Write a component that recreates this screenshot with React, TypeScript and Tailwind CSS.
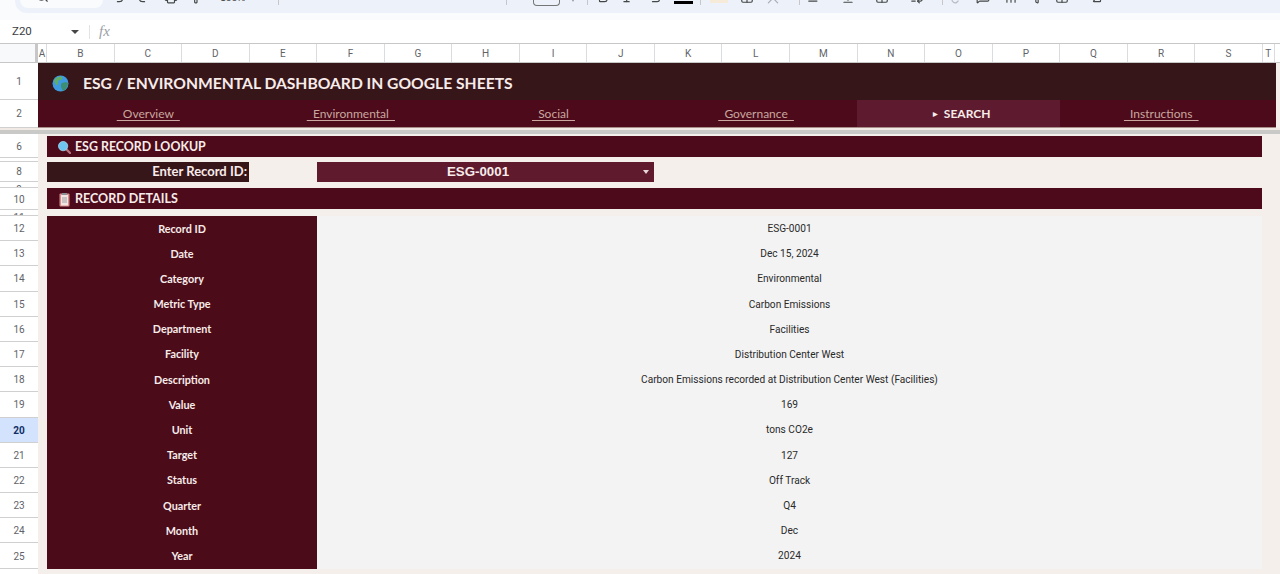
import React from "react";
import { Undo2, Redo2, Printer, PaintRoller, ArrowLeft, ArrowRight, Bold, Italic, Strikethrough, Grid2x2, Merge, AlignLeft, ArrowDownToLine, Columns2, WrapText, Link, MessageSquare, BarChart2, Filter, Table, Sigma, Plus, Search } from "lucide-react";

const columns = ["A","B","C","D","E","F","G","H","I","J","K","L","M","N","O","P","Q","R","S","T"];
const nav = ["Overview","Environmental","Social","Governance","SEARCH","Instructions"];
const records: [number,string,string][] = [
  [12,"Record ID","ESG-0001"],[13,"Date","Dec 15, 2024"],[14,"Category","Environmental"],[15,"Metric Type","Carbon Emissions"],
  [16,"Department","Facilities"],[17,"Facility","Distribution Center West"],[18,"Description","Carbon Emissions recorded at Distribution Center West (Facilities)"],
  [19,"Value","169"],[20,"Unit","tons CO2e"],[21,"Target","127"],[22,"Status","Off Track"],[23,"Quarter","Q4"],[24,"Month","Dec"],[25,"Year","2024"],
];

function RowNo({ n, className = "", active = false }: { n: number | string; className?: string; active?: boolean }) {
  const tone = active ? "bg-[#d3e3fd] text-[#0f2f66] font-bold" : "bg-white text-[#5f6368]";
  return <div className={"w-[38px] shrink-0 flex items-center justify-center border-b border-[#d0d0d0] text-[10px] overflow-hidden font-['Roboto',sans-serif] " + tone + " " + className}>{n}</div>;
}
const Ico = ({ children, className = "" }: { children: React.ReactNode; className?: string }) => (
  <span className={"shrink-0 w-[14px] flex justify-center text-[#444746] -mt-[10px] " + className}>{children}</span>
);
const Sep = ({ className = "" }: { className?: string }) => <span className={"shrink-0 w-px h-[5px] bg-[#c7c7c7] " + className} />;

function Globe() {
  return (
    <svg width="17" height="17" viewBox="0 0 17 17" className="shrink-0">
      <circle cx="8.5" cy="8.5" r="8" fill="#3f9be0" />
      <path d="M3 4c2-2 5-3 7-2 1 1 0 3-2 3S6 7 6 9s-2 1-3-1-1-3 0-4z" fill="#5fae6a" />
      <path d="M10 8c2-1 5-1 6 0 0 3-2 7-5 8-1-2-2-3-2-5s0-2 1-3z" fill="#3c8f72" />
    </svg>
  );
}
function Lens() {
  return (
    <svg width="13" height="13" viewBox="0 0 14 14" className="shrink-0">
      <path d="M8.5 8.5 13 13" stroke="#b8747f" strokeWidth="2.4" strokeLinecap="round" />
      <circle cx="5.5" cy="5.5" r="5" fill="#6ec6f0" stroke="#a9dcf2" strokeWidth="0.8" />
    </svg>
  );
}
function Clip() {
  return (
    <svg width="11" height="14" viewBox="0 0 11 14" className="shrink-0">
      <rect x="0.5" y="0.5" width="10" height="13" rx="1" fill="#d98e8e" />
      <rect x="2" y="2" width="7" height="10.5" fill="#f2e4e0" />
      <rect x="3" y="0" width="5" height="2" fill="#8a8f98" />
      <path d="M3 5h5M3 7h5M3 9h5" stroke="#8a8f98" strokeWidth="0.8" />
    </svg>
  );
}

export default function App() {
  return (
    <div className="w-[1280px] h-[574px] overflow-hidden bg-[#f4efeb] flex flex-col font-['Lato','Liberation_Sans',sans-serif]">
      {/* clipped toolbar */}
      <div className="bg-[#f9fbfd] h-[20px] shrink-0 pl-[15px]">
        <div className="h-[13px] bg-[#edf2fa] rounded-bl-[12px] overflow-hidden flex items-start">
          <span className="shrink-0 ml-[5px] w-[83px] h-[8px] bg-[#f9fbfd] rounded-b-[10px] flex justify-start pl-[15px] overflow-hidden">
            <Search size={14} className="shrink-0 -mt-[11px] text-[#444746]" />
          </span>
          <Ico className="ml-[8px]"><Undo2 size={14} /></Ico>
          <Ico className="ml-[12px]"><Redo2 size={14} /></Ico>
          <Ico className="ml-[13px]"><Printer size={14} /></Ico>
          <Ico className="ml-[12px]"><PaintRoller size={14} /></Ico>
          <span className="shrink-0 ml-[16px] w-[30px] -mt-[8px] text-[10px] leading-[10px] text-[#444746]">100%</span>
          <Sep className="ml-[28px]" />
          <Ico className="ml-[64px]"><ArrowLeft size={12} /></Ico>
          <Ico className="ml-[14px]"><ArrowRight size={12} /></Ico>
          <Sep className="ml-[121px]" />
          <span className="shrink-0 ml-[26px] w-[27px] h-[6px] rounded-b-[4px] border border-t-0 border-[#747775]" />
          <span className="shrink-0 w-[10px] ml-[8px] -mt-[7px] flex justify-center text-[#444746]"><Plus size={10} /></span>
          <Sep className="ml-[9px]" />
          <Ico className="ml-[8px]"><Bold size={14} /></Ico>
          <Ico className="ml-[11px]"><Italic size={14} /></Ico>
          <Ico className="ml-[14px]"><Strikethrough size={14} /></Ico>
          <span className="shrink-0 ml-[11px] mt-[1px] w-[19px] h-[3px] bg-black" />
          <Sep className="ml-[7px]" />
          <span className="shrink-0 ml-[9px] w-[18px] h-[3px] bg-[#f6ead9]" />
          <Ico className="ml-[12px]"><Grid2x2 size={14} /></Ico>
          <Ico className="ml-[12px] opacity-40"><Merge size={14} /></Ico>
          <Sep className="ml-[19px]" />
          <Ico className="ml-[7px]"><AlignLeft size={14} /></Ico>
          <Ico className="ml-[20px]"><ArrowDownToLine size={14} /></Ico>
          <Ico className="ml-[20px]"><Columns2 size={14} /></Ico>
          <Ico className="ml-[21px]"><WrapText size={14} /></Ico>
          <Sep className="ml-[18px]" />
          <Ico className="ml-[8px] opacity-30"><Link size={14} /></Ico>
          <Ico className="ml-[11px]"><MessageSquare size={14} /></Ico>
          <Ico className="ml-[14px]"><BarChart2 size={14} /></Ico>
          <Ico className="ml-[12px]"><Filter size={14} /></Ico>
          <Ico className="ml-[11px]"><Table size={14} /></Ico>
          <Ico className="ml-[21px]"><Sigma size={14} /></Ico>
        </div>
      </div>

      {/* formula bar */}
      <div className="h-[23px] shrink-0 bg-white flex items-center text-[#444746]">
        <span className="w-[68px] pl-[12px] text-[11.5px] font-['Roboto',sans-serif] text-[#3c4043]">Z20</span>
        <svg width="8" height="4" viewBox="0 0 8 4" className="ml-[3px]"><path d="M0 0h8L4 4z" fill="#444746" /></svg>
        <span className="ml-[10px] w-px h-[14px] bg-[#e3e3e3]" />
        <span className="ml-[9px] text-[15px] italic font-['Liberation_Serif',serif] text-[#9aa0a6]">fx</span>
      </div>

      {/* column headers */}
      <div className="h-[20px] shrink-0 flex bg-white border-y border-[#c7c7c7] text-[10px] text-[#5f6368] font-['Roboto',sans-serif]">
        <div className="w-[38px] shrink-0 bg-[#f8f9fa] border-r-[3px] border-[#c7c7c7]" />
        <div className="flex-1 grid grid-cols-[9px_repeat(18,67.55px)_12px_1fr]">
          {columns.map((c) => (
            <div key={c} className="flex items-center justify-center border-r border-[#dadce0]">{c}</div>
          ))}
          <div />
        </div>
      </div>

      {/* frozen banner */}
      <div className="flex h-[37px] shrink-0">
        <RowNo n={1} />
        <div className="w-[1238px] bg-[#37161a] flex items-center pl-[14px] pt-[4px] gap-[14px]">
          <Globe />
          <span className="text-[15.65px] font-bold text-[#f7ecea]">ESG / ENVIRONMENTAL DASHBOARD IN GOOGLE SHEETS</span>
        </div>
      </div>
      <div className="flex h-[28px] shrink-0">
        <RowNo n={2} />
        <div className="w-[1238px] bg-[#4d0a1a] border-b border-[#a98f8a] flex pl-[9px]">
          {nav.map((t) =>
            t === "SEARCH" ? (
              <div key={t} className="w-[202.6px] bg-[#5e1a2e] flex items-center justify-center pl-[6px] gap-[6px] text-[12px] font-bold text-[#f7ecea]">
                <span className="text-[6px]">▶</span>SEARCH
              </div>
            ) : (
              <div key={t} className="w-[202.6px] flex items-center justify-center text-[12px] text-[#c9a79f] underline underline-offset-2 whitespace-pre">{"  " + t + "  "}</div>
            )
          )}
        </div>
      </div>

      {/* freeze divider */}
      <div className="h-[6px] shrink-0 flex flex-col">
        <div className="h-[2px] bg-[#f0e9e4]" />
        <div className="h-[4px] bg-[#c9c9c7]" />
      </div>

      {/* row 6 */}
      <div className="flex h-[24px] shrink-0">
        <RowNo n={6} className="pt-[2px]" />
        <div className="ml-[9px] w-[1215px] mt-[2px] h-[21px] bg-[#4d0a1a] flex items-center pl-[11px] pt-[1px] gap-[4px] text-[12.4px] font-bold text-[#f7ecea]">
          <Lens />ESG RECORD LOOKUP
        </div>
      </div>
      <div className="flex h-[4px] shrink-0"><RowNo n="" /></div>

      {/* row 8 */}
      <div className="flex h-[20px] shrink-0">
        <RowNo n={8} />
        <div className="ml-[9px] w-[202px] bg-[#37161a] flex items-center justify-end pr-[2px] text-[13px] font-bold text-[#f7ecea]">Enter Record ID:</div>
        <div className="ml-[68px] w-[337px] bg-[#5f1a2e] flex items-center pr-[5px]">
          <span className="flex-1 text-center pr-[4px] text-[13.3px] font-bold text-[#f7ecea] font-['Liberation_Sans',sans-serif]">ESG-0001</span>
          <svg width="6" height="4" viewBox="0 0 6 4"><path d="M0 0h6L3 4z" fill="#e8d8d8" /></svg>
        </div>
      </div>
      <div className="flex h-[6px] shrink-0"><RowNo n={9} className="items-start pt-[3px] leading-[10px]" /></div>

      {/* row 10 */}
      <div className="flex h-[22px] shrink-0">
        <RowNo n={10} className="pt-[1px]" />
        <div className="ml-[9px] w-[1215px] h-[21px] bg-[#4d0a1a] flex items-center pl-[12px] gap-[5px] pt-[2px] text-[12.5px] font-bold text-[#f7ecea]">
          <Clip />RECORD DETAILS
        </div>
      </div>
      <div className="flex h-[6px] shrink-0"><RowNo n={11} className="items-start pt-[3px] leading-[10px]" /></div>

      {/* details */}
      {records.map(([n, label, value]) => (
        <div key={n} className="flex h-[25.2px] shrink-0">
          <RowNo n={n} active={n === 20} className="pt-[1px]" />
          <div className="ml-[9px] w-[270px] bg-[#4b0b19] flex items-center justify-center text-[10.8px] font-bold text-[#f7ecea]">{label}</div>
          <div className="w-[945px] bg-[#f3f3f3] flex items-center justify-center text-[10.15px] text-[#2a2a2a] font-['Roboto',sans-serif]">{value}</div>
        </div>
      ))}
      <div className="flex flex-1"><div className="w-[38px] bg-white" /></div>
    </div>
  );
}
